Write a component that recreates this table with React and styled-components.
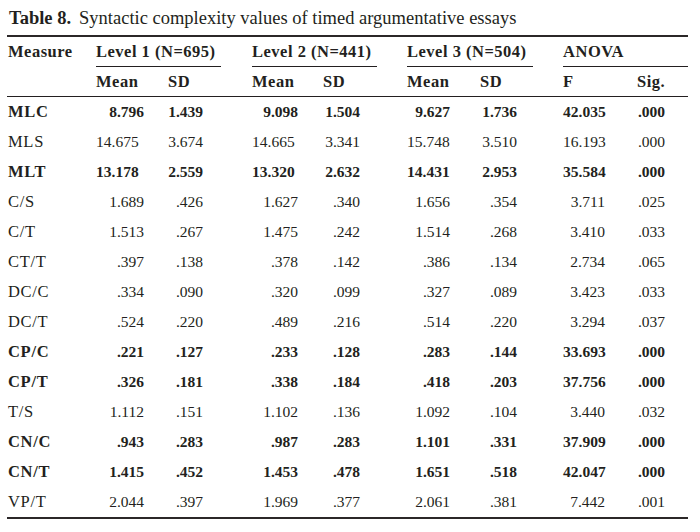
import React from "react";
import styled, { createGlobalStyle } from "styled-components";

const GlobalStyle = createGlobalStyle`
  body {
    margin: 0;
    background: #ffffff;
  }
`;

const Page = styled.div`
  padding: 7px 0 0 7px;
  font-family: "Liberation Serif", "Times New Roman", serif;
  color: #231f20;
`;

const Caption = styled.div`
  height: 28px;
  padding-left: 2px;
  font-size: 18.5px;
  line-height: 22px;
  white-space: nowrap;

  b {
    margin-right: 8px;
  }
`;

const Table = styled.table`
  width: 681px;
  table-layout: fixed;
  border-collapse: separate;
  border-spacing: 0;
`;

const HeadCell = styled.th`
  padding: 0 ${(p) => p.$padRight || 0}px 0 ${(p) => p.$padLeft || 0}px;
  height: ${(p) => p.$height || 29}px;
  font-size: 16.5px;
  font-weight: 700;
  letter-spacing: 0.5px;
  text-align: left;
  vertical-align: ${(p) => (p.$alignTop ? "top" : "middle")};
  white-space: nowrap;
  border-top: ${(p) => (p.$top ? "2px solid #2b2728" : "none")};
  border-bottom: ${(p) => (p.$bottom ? "1px solid #231f20" : "none")};
`;

const GroupLabel = styled.div`
  height: 29px;
  line-height: 30px;
  border-bottom: ${(p) => (p.$plain ? "none" : "1px solid #231f20")};
`;

const Row = styled.tr`
  font-weight: ${(p) => (p.$bold ? 700 : 400)};
`;

const LabelCell = styled.td`
  height: 30px;
  padding: 0 0 0 1px;
  font-size: 16.5px;
  letter-spacing: 0.7px;
  line-height: 30px;
  white-space: nowrap;
  border-bottom: ${(p) => (p.$last ? "2px solid #2b2728" : "none")};
`;

const ValueCell = styled.td`
  height: 30px;
  padding: 0 ${(p) => p.$pad}px 0 0;
  font-size: 15.5px;
  line-height: 30px;
  text-align: right;
  white-space: nowrap;
  border-bottom: ${(p) => (p.$last ? "2px solid #2b2728" : "none")};
`;

// column widths follow the printed table (x = 7 .. 688)
const WIDTHS = [89, 72, 84, 71, 84, 73, 83, 74, 51];

// right padding for each value column; Mean columns shift two-digit values left
const COLUMNS = [
  { pad: 24, wide: 35 },
  { pad: 49 },
  { pad: 25, wide: 40 },
  { pad: 47 },
  { pad: 30, wide: 45 },
  { pad: 46 },
  { pad: 32 },
  { pad: 23 },
];

const GROUPS = [
  { label: "Level 1 (N=695)", gap: 31 },
  { label: "Level 2 (N=441)", gap: 30 },
  { label: "Level 3 (N=504)", gap: 30 },
  { label: "ANOVA", gap: 0 },
];

const SUBHEADS = ["Mean", "SD", "Mean", "SD", "Mean", "SD", "F", "Sig."];

const ROWS = [
  { name: "MLC", bold: true, values: ["8.796", "1.439", "9.098", "1.504", "9.627", "1.736", "42.035", ".000"] },
  { name: "MLS", values: ["14.675", "3.674", "14.665", "3.341", "15.748", "3.510", "16.193", ".000"] },
  { name: "MLT", bold: true, values: ["13.178", "2.559", "13.320", "2.632", "14.431", "2.953", "35.584", ".000"] },
  { name: "C/S", values: ["1.689", ".426", "1.627", ".340", "1.656", ".354", "3.711", ".025"] },
  { name: "C/T", values: ["1.513", ".267", "1.475", ".242", "1.514", ".268", "3.410", ".033"] },
  { name: "CT/T", values: [".397", ".138", ".378", ".142", ".386", ".134", "2.734", ".065"] },
  { name: "DC/C", values: [".334", ".090", ".320", ".099", ".327", ".089", "3.423", ".033"] },
  { name: "DC/T", values: [".524", ".220", ".489", ".216", ".514", ".220", "3.294", ".037"] },
  { name: "CP/C", bold: true, values: [".221", ".127", ".233", ".128", ".283", ".144", "33.693", ".000"] },
  { name: "CP/T", bold: true, values: [".326", ".181", ".338", ".184", ".418", ".203", "37.756", ".000"] },
  { name: "T/S", values: ["1.112", ".151", "1.102", ".136", "1.092", ".104", "3.440", ".032"] },
  { name: "CN/C", bold: true, values: [".943", ".283", ".987", ".283", "1.101", ".331", "37.909", ".000"] },
  { name: "CN/T", bold: true, values: ["1.415", ".452", "1.453", ".478", "1.651", ".518", "42.047", ".000"] },
  { name: "VP/T", values: ["2.044", ".397", "1.969", ".377", "2.061", ".381", "7.442", ".001"] },
];

const isWide = (v) => v.split(".")[0].length > 1;

const App = () => {
  return (
    <Page>
      <GlobalStyle />
      <Caption>
        <b>Table 8.</b>
        Syntactic complexity values of timed argumentative essays
      </Caption>
      <Table>
        <colgroup>
          {WIDTHS.map((w, i) => (
            <col key={i} style={{ width: w }} />
          ))}
        </colgroup>
        <thead>
          <tr>
            <HeadCell rowSpan={2} $top $bottom $padLeft={1} $alignTop>
              <GroupLabel $plain>Measure</GroupLabel>
            </HeadCell>
            {GROUPS.map((g) => (
              <HeadCell key={g.label} colSpan={2} $top $padRight={g.gap} $height={30}>
                <GroupLabel>{g.label}</GroupLabel>
              </HeadCell>
            ))}
          </tr>
          <tr>
            {SUBHEADS.map((s, i) => (
              <HeadCell key={i} $bottom>
                {s}
              </HeadCell>
            ))}
          </tr>
        </thead>
        <tbody>
          {ROWS.map((row, r) => {
            const last = r === ROWS.length - 1;
            return (
              <Row key={row.name} $bold={row.bold}>
                <LabelCell $last={last}>{row.name}</LabelCell>
                {row.values.map((v, i) => {
                  const col = COLUMNS[i];
                  const pad = col.wide && isWide(v) ? col.wide : col.pad;
                  return (
                    <ValueCell key={i} $pad={pad} $last={last}>
                      {v}
                    </ValueCell>
                  );
                })}
              </Row>
            );
          })}
        </tbody>
      </Table>
    </Page>
  );
};

export default App;
